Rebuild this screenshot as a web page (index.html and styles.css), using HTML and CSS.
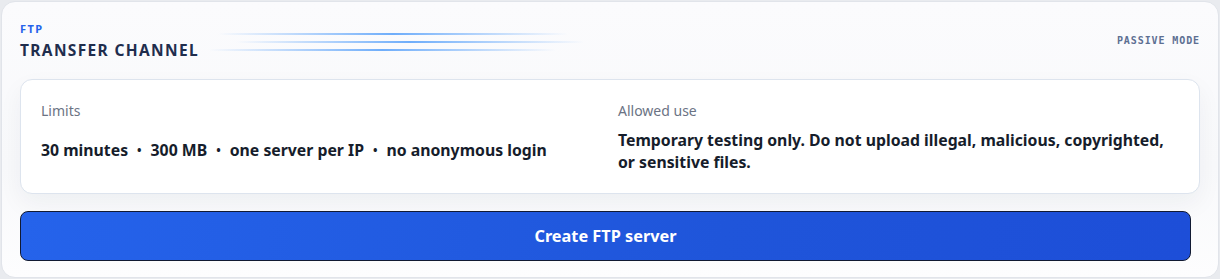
FILE: index.html
```html
<!DOCTYPE html>
<html>
<head>
<meta charset="utf-8">
<link rel="stylesheet" href="styles.css">
</head>
<body>
<section class="panel">
  <header class="panel-head">
    <div class="titles">
      <div class="eyebrow">FTP</div>
      <h1 class="title">TRANSFER CHANNEL</h1>
    </div>
    <div class="streaks">
      <span class="streak s1"></span>
      <span class="streak s2"></span>
      <span class="streak s3"></span>
    </div>
    <div class="mode">PASSIVE MODE</div>
  </header>
  <div class="info">
    <div class="col">
      <div class="label">Limits</div>
      <div class="value limits">30 minutes<span class="dot">•</span>300 MB<span class="dot">•</span>one server per IP<span class="dot">•</span>no anonymous login</div>
    </div>
    <div class="col">
      <div class="label">Allowed use</div>
      <div class="value">Temporary testing only. Do not upload illegal, malicious, copyrighted, or sensitive files.</div>
    </div>
  </div>
  <button class="create">Create FTP server</button>
</section>
</body>
</html>
```
FILE: styles.css
```css
* { box-sizing: border-box; }
html, body { margin: 0; padding: 0; }
body {
  background: #e9ebef;
  font-family: "Noto Sans", "Lato", sans-serif;
  padding: 1px;
}
.panel {
  width: 1218px;
  height: 277px;
  background: linear-gradient(180deg, #fbfbfd 0%, #f8f9fb 60%, #fdfdfe 100%);
  border: 1px solid #e1e4ea;
  border-radius: 14px;
  padding: 19px 18px 16px 18px;
  display: flex;
  flex-direction: column;
}
.panel-head {
  display: flex;
  align-items: center;
  height: 40px;
}
.titles { display: flex; flex-direction: column; }
.eyebrow {
  font-size: 11px;
  font-weight: 700;
  color: #2563eb;
  letter-spacing: 1.4px;
  line-height: 14px;
}
.title {
  margin: 4px 0 0;
  font-size: 15.5px;
  font-weight: 700;
  color: #1f2d4d;
  letter-spacing: 1.35px;
  line-height: 20px;
}
.streaks {
  display: flex;
  flex-direction: column;
  gap: 6px;
  width: 380px;
  margin-left: 10px;
  margin-top: 2px;
}
.streak {
  display: block;
  height: 2px;
  background: linear-gradient(90deg, rgba(96,165,250,0) 0%, rgba(96,165,250,0.9) 50%, rgba(96,165,250,0) 100%);
}
.s1 { margin-left: 9px; width: 350px; }
.s2 { margin-left: 27px; width: 348px; }
.s3 { margin-left: 0; width: 347px; }
.mode {
  margin-left: auto;
  font-family: "DejaVu Sans Mono", monospace;
  font-size: 10px;
  font-weight: 700;
  letter-spacing: 0.9px;
  color: #5d6f92;
}
.info {
  margin-top: 18px;
  background: #ffffff;
  border: 1px solid #dde4ee;
  border-radius: 12px;
  padding: 21px 20px 20px;
  display: grid;
  grid-template-columns: 1fr 1fr;
  column-gap: 16px;
  height: 115px;
  box-shadow: 0 10px 24px rgba(20, 30, 60, 0.05);
}
.label {
  font-size: 14px;
  color: #6b7384;
  line-height: 20px;
}
.value {
  margin-top: 8px;
  font-size: 15.8px;
  font-weight: 700;
  color: #161d2b;
  line-height: 22px;
}
.value.limits { margin-top: 18px; }
.dot {
  display: inline-block;
  font-size: 12px;
  margin: 0 9px;
  vertical-align: 1px;
}
.create {
  margin-top: 17px;
  width: 1171px;
  height: 51px;
  border: 1px solid #111a33;
  border-radius: 8px;
  background: linear-gradient(100deg, #2563eb 0%, #1f55da 60%, #1d4ed8 100%);
  color: #ffffff;
  font-family: "Noto Sans", "Lato", sans-serif;
  font-size: 16.3px;
  font-weight: 700;
  cursor: pointer;
}
```
